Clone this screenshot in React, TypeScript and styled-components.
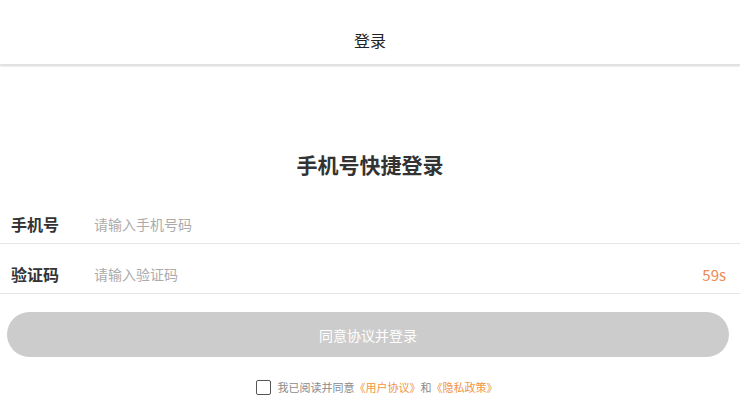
import React from 'react';
import styled, { createGlobalStyle } from 'styled-components';

const GlobalStyle = createGlobalStyle`
  html, body {
    margin: 0;
    padding: 0;
    background: #fff;
    font-family: "Noto Sans CJK SC", "Noto Sans", sans-serif;
  }
`;

const Page = styled.div`
  display: flex;
  flex-direction: column;
  width: 740px;
  height: 407px;
  overflow: hidden;
`;

const Header = styled.header`
  height: 48px;
  padding-top: 16px;
  display: flex;
  align-items: center;
  justify-content: center;
  font-size: 16px;
  color: #222;
  box-shadow: 0 1px 2px rgba(0, 0, 0, 0.18);
  border-bottom: 1px solid #e2e2e2;
`;

const Title = styled.h1`
  margin: 86px 0 0;
  height: 26px;
  line-height: 26px;
  text-align: center;
  font-size: 21px;
  font-weight: 700;
  color: #333;
`;

const Form = styled.div`
  margin-top: 17px;
  display: flex;
  flex-direction: column;
`;

const Row = styled.div`
  display: flex;
  align-items: center;
  height: 38px;
  padding: 11px 14px 0 11px;
  border-bottom: 1px solid #e6e6e6;
`;

const Label = styled.span`
  width: 83px;
  font-size: 16px;
  font-weight: 700;
  color: #333;
`;

const Field = styled.input`
  flex: 1;
  border: none;
  outline: none;
  padding: 0;
  font-family: inherit;
  font-size: 14px;
  color: #333;
  background: transparent;

  &::placeholder {
    color: #ababab;
  }
`;

const Countdown = styled.span`
  font-size: 15px;
  color: #ee8a52;
`;

const SubmitButton = styled.button`
  margin: 18px 11px 0 7px;
  height: 45px;
  border: none;
  border-radius: 23px;
  background: #cccccc;
  color: #fff;
  font-family: inherit;
  font-size: 14px;
`;

const Agreement = styled.label`
  margin-top: 22px;
  display: flex;
  align-items: center;
  justify-content: center;
  gap: 7px;
  font-size: 11px;
  color: #8a8a8a;
  padding-left: 13px;
`;

const Box = styled.span`
  width: 13px;
  height: 13px;
  border: 1.5px solid #555;
  border-radius: 2px;
`;

const Link = styled.span`
  color: #f0963f;
`;

export default function App() {
  return (
    <Page>
      <GlobalStyle />
      <Header>登录</Header>
      <Title>手机号快捷登录</Title>
      <Form>
        <Row>
          <Label>手机号</Label>
          <Field placeholder="请输入手机号码" />
        </Row>
        <Row>
          <Label>验证码</Label>
          <Field placeholder="请输入验证码" />
          <Countdown>59s</Countdown>
        </Row>
      </Form>
      <SubmitButton>同意协议并登录</SubmitButton>
      <Agreement>
        <Box />
        <span>
          我已阅读并同意<Link>《用户协议》</Link>和<Link>《隐私政策》</Link>
        </span>
      </Agreement>
    </Page>
  );
}
